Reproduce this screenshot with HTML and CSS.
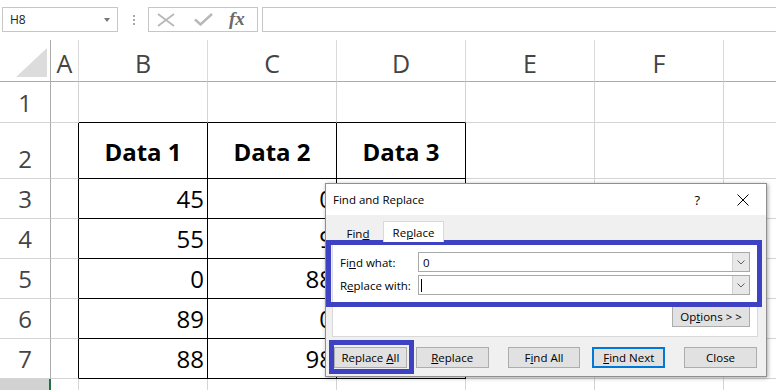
FILE: index.html
```html
<!DOCTYPE html>
<html>
<head>
<meta charset="utf-8">
<link rel="stylesheet" href="styles.css">
</head>
<body>
<div class="page">
  <div class="fbar">
    <div class="namebox"><span>H8</span><span class="caret"></span></div>
    <div class="dots"><i></i><i></i><i></i></div>
    <div class="fbtns">
      <svg class="ico-x" width="18" height="14" viewBox="0 0 18 14"><path d="M1 1 L17 13 M17 1 L1 13" stroke="#b8b8b8" stroke-width="1.8" fill="none"/></svg>
      <svg class="ico-ok" width="19" height="13" viewBox="0 0 19 13"><path d="M1 6.5 L6.5 11.5 L18 1" stroke="#b8b8b8" stroke-width="2.4" fill="none"/></svg>
      <span class="fx">fx</span>
    </div>
    <div class="finput"></div>
  </div>

  <div class="grid">
    <!-- header row -->
    <div class="c corner"><svg width="31" height="29" viewBox="0 0 31 29"><polygon points="31,0 31,29 0,29" fill="#dcdcdc"/></svg></div>
    <div class="c ch">A</div>
    <div class="c ch">B</div>
    <div class="c ch">C</div>
    <div class="c ch">D</div>
    <div class="c ch">E</div>
    <div class="c ch">F</div>
    <div class="c ch"></div>
    <!-- row 1 -->
    <div class="c rh">1</div>
    <div class="c"></div>
    <div class="c bb"></div>
    <div class="c bb"></div>
    <div class="c bb"></div>
    <div class="c"></div>
    <div class="c"></div>
    <div class="c"></div>
    <!-- row 2 -->
    <div class="c rh">2</div>
    <div class="c br"></div>
    <div class="c br bb dh">Data 1</div>
    <div class="c br bb dh">Data 2</div>
    <div class="c br bb dh">Data 3</div>
    <div class="c"></div>
    <div class="c"></div>
    <div class="c"></div>
    <!-- row 3 -->
    <div class="c rh">3</div>
    <div class="c br"></div>
    <div class="c br bb num">45</div>
    <div class="c br bb num">0</div>
    <div class="c br bb num"></div>
    <div class="c"></div>
    <div class="c"></div>
    <div class="c"></div>
    <!-- row 4 -->
    <div class="c rh">4</div>
    <div class="c br"></div>
    <div class="c br bb num">55</div>
    <div class="c br bb num">9</div>
    <div class="c br bb num"></div>
    <div class="c"></div>
    <div class="c"></div>
    <div class="c"></div>
    <!-- row 5 -->
    <div class="c rh">5</div>
    <div class="c br"></div>
    <div class="c br bb num">0</div>
    <div class="c br bb num">88</div>
    <div class="c br bb num"></div>
    <div class="c"></div>
    <div class="c"></div>
    <div class="c"></div>
    <!-- row 6 -->
    <div class="c rh">6</div>
    <div class="c br"></div>
    <div class="c br bb num">89</div>
    <div class="c br bb num">0</div>
    <div class="c br bb num"></div>
    <div class="c"></div>
    <div class="c"></div>
    <div class="c"></div>
    <!-- row 7 -->
    <div class="c rh">7</div>
    <div class="c br"></div>
    <div class="c br bb num">88</div>
    <div class="c br bb num">98</div>
    <div class="c br bb num"></div>
    <div class="c"></div>
    <div class="c"></div>
    <div class="c"></div>
    <!-- row 8 -->
    <div class="c rh sel"></div>
    <div class="c"></div>
    <div class="c"></div>
    <div class="c"></div>
    <div class="c"></div>
    <div class="c"></div>
    <div class="c"></div>
    <div class="c"></div>
  </div>

  <div class="dialog">
    <div class="titlebar">
      <span class="title">Find and Replace</span>
      <span class="help">?</span>
      <svg class="close-x" width="12" height="12" viewBox="0 0 12 12"><path d="M0.5 0.5 L11.5 11.5 M11.5 0.5 L0.5 11.5" stroke="#000" stroke-width="1" fill="none"/></svg>
    </div>
    <div class="dbody">
      <div class="tabs">
        <div class="tab">Fin<u>d</u></div>
        <div class="tab active">Re<u>p</u>lace</div>
      </div>
      <div class="panel">
        <div class="frow">
          <span class="lbl">Fi<u>n</u>d what:</span>
          <div class="combo">
            <span class="val">0</span>
            <span class="drop"><svg width="8" height="5" viewBox="0 0 8 5"><path d="M0.5 0.5 L4 4 L7.5 0.5" stroke="#606060" stroke-width="1" fill="none"/></svg></span>
          </div>
        </div>
        <div class="frow">
          <span class="lbl">R<u>e</u>place with:</span>
          <div class="combo">
            <span class="cursor"></span>
            <span class="drop"><svg width="8" height="5" viewBox="0 0 8 5"><path d="M0.5 0.5 L4 4 L7.5 0.5" stroke="#606060" stroke-width="1" fill="none"/></svg></span>
          </div>
        </div>
        <div class="optrow"><button class="btn opt">Op<u>t</u>ions &gt; &gt;</button></div>
      </div>
      <div class="btnrow">
        <button class="btn">Replace <u>A</u>ll</button>
        <button class="btn m9"><u>R</u>eplace</button>
        <button class="btn m19">F<u>i</u>nd All</button>
        <button class="btn m12 def"><u>F</u>ind Next</button>
        <button class="btn m19">Close</button>
      </div>
    </div>
    <div class="hl hl-fields"></div>
    <div class="hl hl-replall"></div>
  </div>
</div>
</body>
</html>
```

FILE: styles.css
```css
* { box-sizing: border-box; }
body {
  margin: 0;
  background: #fff;
  font-family: "Open Sans", "Noto Sans", sans-serif;
}
.page {
  position: relative;
  width: 776px;
  height: 390px;
  overflow: hidden;
}

/* formula bar */
.fbar {
  display: flex;
  align-items: flex-start;
  height: 40px;
  padding-top: 7px;
}
.fbar > * { flex: none; }
.namebox {
  margin-left: 2px;
  width: 116px;
  height: 25px;
  border: 1px solid #c6c6c6;
  display: flex;
  align-items: center;
  justify-content: space-between;
  padding: 0 7px 0 7px;
  font-size: 12px;
  color: #222;
}
.caret {
  width: 0;
  height: 0;
  border-left: 3.5px solid transparent;
  border-right: 3.5px solid transparent;
  border-top: 4px solid #777;
}
.dots {
  margin-left: 15px;
  margin-top: 8px;
  display: flex;
  flex-direction: column;
  gap: 2px;
}
.dots i {
  display: block;
  width: 2px;
  height: 2px;
  background: #a8a8a8;
}
.fbtns {
  margin-left: 13px;
  width: 110px;
  height: 25px;
  border: 1px solid #c6c6c6;
  display: flex;
  align-items: center;
  padding-left: 8px;
}
.ico-ok { margin-left: 19px; }
.fx {
  margin-left: 16px;
  font-family: "Liberation Serif", serif;
  font-style: italic;
  font-weight: bold;
  font-size: 19px;
  color: #6a6a6a;
  line-height: 1;
  margin-top: -3px;
}
.finput {
  margin-left: 4px;
  width: 560px;
  height: 25px;
  border: 1px solid #c6c6c6;
}

/* grid */
.grid {
  display: grid;
  grid-template-columns: 51px 28px 129px 129px 129px 129px 129px 129px;
  grid-template-rows: 42px 41px 56px 40px 40px 40px 40px 40px 40px;
}
.c {
  border-right: 1px solid #d4d4d4;
  border-bottom: 1px solid #d4d4d4;
  display: flex;
  align-items: flex-end;
  font-size: 24px;
  line-height: 24px;
  color: #000;
}
.corner {
  border-right: 1px solid #ababab;
  border-bottom: 1px solid #ababab;
  justify-content: flex-end;
  padding: 0 3px 4px 0;
  line-height: 0;
}
.ch {
  border-right: 1px solid #dadada;
  border-bottom: 1px solid #ababab;
  justify-content: center;
  font-size: 25px;
  line-height: 25px;
  padding-bottom: 5px;
  color: #444;
}
.rh {
  border-right: 1px solid #ababab;
  justify-content: center;
  padding-bottom: 7px;
  color: #444;
}
.rh.sel {
  background: #d2d2d2;
  border-right: 2px solid #217346;
}
.br { border-right-color: #000; }
.bb { border-bottom-color: #000; }
.num {
  justify-content: flex-end;
  padding: 0 3px 7px 0;
}
.dh {
  justify-content: center;
  font-weight: bold;
  padding-bottom: 14px;
}

/* dialog */
.dialog {
  position: absolute;
  left: 325px;
  top: 183px;
  width: 442px;
  height: 194px;
  border: 1px solid #8f8f8f;
  background: #f0f0f0;
  box-shadow: 1px 1px 4px rgba(0,0,0,0.35);
  font-size: 11.5px;
  color: #000;
}
.titlebar {
  height: 31px;
  background: #fff;
  display: flex;
  align-items: center;
  padding-left: 7px;
}
.title { flex: 1; }
.help {
  font-size: 13px;
  margin-right: 37px;
}
.close-x { margin-right: 17px; }
.dbody {
  padding: 6px 9px 0 6px;
}
.tabs {
  display: flex;
  height: 21px;
  margin-bottom: -1px;
  margin-left: 1px;
  position: relative;
  z-index: 1;
}
.tab {
  width: 50px;
  display: flex;
  align-items: center;
  justify-content: center;
  padding-top: 4px;
}
.tab.active {
  width: 61px;
  background: #fff;
  border: 1px solid #d9d9d9;
  border-bottom: none;
  padding-top: 1px;
}
.panel {
  width: 426px;
  height: 96px;
  border: 1px solid #d9d9d9;
  background: #fff;
  padding: 10px 7px 8px 7px;
  display: flex;
  flex-direction: column;
}
.frow {
  display: flex;
  align-items: center;
  height: 20px;
  margin-bottom: 3px;
}
.lbl { width: 78px; flex: none; }
.combo {
  flex: 1;
  height: 20px;
  border: 1px solid #a9a9a9;
  display: flex;
  align-items: center;
}
.val { padding-left: 4px; }
.cursor {
  margin-left: 2px;
  width: 1px;
  height: 13px;
  background: #000;
}
.drop {
  margin-left: auto;
  width: 17px;
  height: 100%;
  background: #e8e8e8;
  border-left: 1px solid #d0d0d0;
  display: flex;
  align-items: center;
  justify-content: center;
}
.optrow {
  margin-top: 8px;
  display: flex;
  justify-content: flex-end;
}
.btn {
  width: 73px;
  height: 21px;
  border: 1px solid #adadad;
  background: #e1e1e1;
  font-family: inherit;
  font-size: 11.5px;
  color: #000;
  padding: 0;
  line-height: 1;
}
.btn.opt { width: 78px; }
.btnrow {
  display: flex;
  margin-top: 10px;
  padding-left: 2px;
}
.m9 { margin-left: 9px; }
.m12 { margin-left: 12px; }
.m19 { margin-left: 19px; }
.btn.def { border: 2px solid #0078d7; }
.hl {
  position: absolute;
  border: 5px solid #3d42c3;
}
.hl-fields {
  left: 0;
  top: 56px;
  width: 436px;
  height: 67px;
}
.hl-replall {
  left: 3px;
  top: 156px;
  width: 85px;
  height: 34px;
}
```
